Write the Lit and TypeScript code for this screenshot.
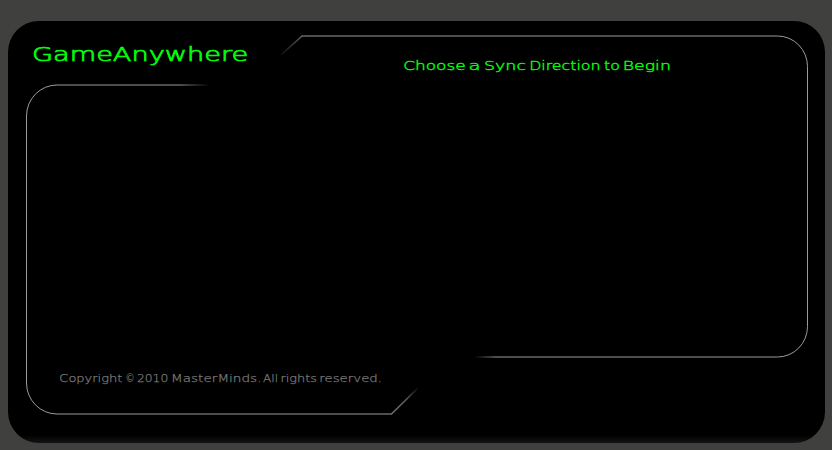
import { LitElement, html, svg, css } from "lit";
import { customElement, property } from "lit/decorators.js";

interface Word {
  text: string;
  x: number;
  width: number;
}

@customElement("wide-label")
class WideLabel extends LitElement {
  static styles = css`
    :host { display: block; height: 24px; }
    svg { display: block; width: 100%; height: 24px; overflow: visible; }
    text {
      fill: currentColor;
      stroke: currentColor;
      stroke-width: var(--label-stroke, 0.3px);
      font-family: "DejaVu Sans Light", "DejaVu Sans", sans-serif;
      font-size: inherit;
      font-weight: 200;
    }
  `;
  @property({ attribute: false }) words: Word[] = [];

  render() {
    return html`<svg>
      ${this.words.map(
        (w) => svg`<text x=${w.x} y="18" textLength=${w.width} lengthAdjust="spacingAndGlyphs">${w.text}</text>`
      )}
    </svg>`;
  }
}

@customElement("app-root")
class AppRoot extends LitElement {
  static styles = css`
    :host {
      display: block;
      box-sizing: border-box;
      width: 832px;
      height: 450px;
      padding: 21px 7px 7px 8px;
      background: #40413e;
      overflow: hidden;
    }
    .panel {
      position: relative;
      display: flex;
      flex-direction: column;
      justify-content: space-between;
      box-sizing: border-box;
      height: 422px;
      padding: 22px 25px 55px;
      border-radius: 31px;
      background: linear-gradient(to bottom, #000 calc(100% - 8px), #131413);
    }
    .frame { position: absolute; inset: 0; width: 817px; height: 422px; }
    .line { fill: none; stroke-width: 1; }
    .slant { stroke-width: 1.6; }
    .top { display: grid; grid-template-columns: 371px 1fr; }
    .title { color: #00ff0c; font-size: 19.2px; --label-stroke: 0.7px; }
    .prompt { color: #00ff0c; font-size: 13px; margin-top: 9px; --label-stroke: 0.4px; }
    .legal { color: #7a7a7a; font-size: 10.8px; margin-left: 27px; --label-stroke: 0.25px; }
  `;

  render() {
    return html`<main class="panel">
      <svg class="frame" viewBox="8 21 817 422">
        <defs>
          <linearGradient id="fadeRight" gradientUnits="userSpaceOnUse" x1="180" y1="0" x2="210" y2="0">
            <stop offset="0" stop-color="#9b9b9b" />
            <stop offset="1" stop-color="#9b9b9b" stop-opacity="0" />
          </linearGradient>
          <linearGradient id="fadeLeft" gradientUnits="userSpaceOnUse" x1="474" y1="0" x2="496" y2="0">
            <stop offset="0" stop-color="#9b9b9b" stop-opacity="0" />
            <stop offset="1" stop-color="#9b9b9b" />
          </linearGradient>
          <linearGradient id="slantTop" gradientUnits="userSpaceOnUse" x1="281" y1="55" x2="302" y2="36">
            <stop offset="0" stop-color="#5c5c5c" stop-opacity="0.15" />
            <stop offset="1" stop-color="#5c5c5c" />
          </linearGradient>
          <linearGradient id="slantBottom" gradientUnits="userSpaceOnUse" x1="392" y1="414" x2="419" y2="387">
            <stop offset="0" stop-color="#707070" />
            <stop offset="0.55" stop-color="#5c5c5c" />
            <stop offset="1" stop-color="#5c5c5c" stop-opacity="0" />
          </linearGradient>
        </defs>
        <path class="line" stroke="url(#fadeRight)" d="M210 85H57A30.5 31 0 0 0 26.5 116V120" />
        <path class="line" stroke="#9b9b9b" d="M26.5 120V383A30.5 31 0 0 0 57 414H392" />
        <path class="line slant" stroke="url(#slantBottom)" d="M391.5 414L419 387" />
        <path class="line slant" stroke="url(#slantTop)" d="M281.5 54.5L302 36" />
        <path class="line" stroke="#9b9b9b" d="M301.5 36H777.5A30 30.5 0 0 1 807.5 66.5V326.5A30 30.5 0 0 1 777.5 357H495" />
        <path class="line" stroke="url(#fadeLeft)" d="M495 357.001L474 357" />
      </svg>
      <header class="top">
        <wide-label class="title" .words=${[{ text: "GameAnywhere", x: -1, width: 216.2 }]}></wide-label>
        <wide-label
          class="prompt"
          .words=${[
            { text: "Choose", x: -0.8, width: 62.5 },
            { text: "a", x: 64.5, width: 12 },
            { text: "Sync", x: 80, width: 42 },
            { text: "Direction", x: 125.2, width: 71.3 },
            { text: "to", x: 200, width: 15.8 },
            { text: "Begin", x: 218.7, width: 48.2 },
          ]}
        ></wide-label>
      </header>
      <wide-label
        class="legal"
        .words=${[
          { text: "Copyright", x: -0.7, width: 63 },
          { text: "©", x: 65.5, width: 9 },
          { text: "2010", x: 77, width: 31.2 },
          { text: "MasterMinds.", x: 111, width: 90.5 },
          { text: "All", x: 203, width: 15 },
          { text: "rights", x: 220.5, width: 36.5 },
          { text: "reserved.", x: 259.3, width: 62.7 },
        ]}
      ></wide-label>
    </main>`;
  }
}
